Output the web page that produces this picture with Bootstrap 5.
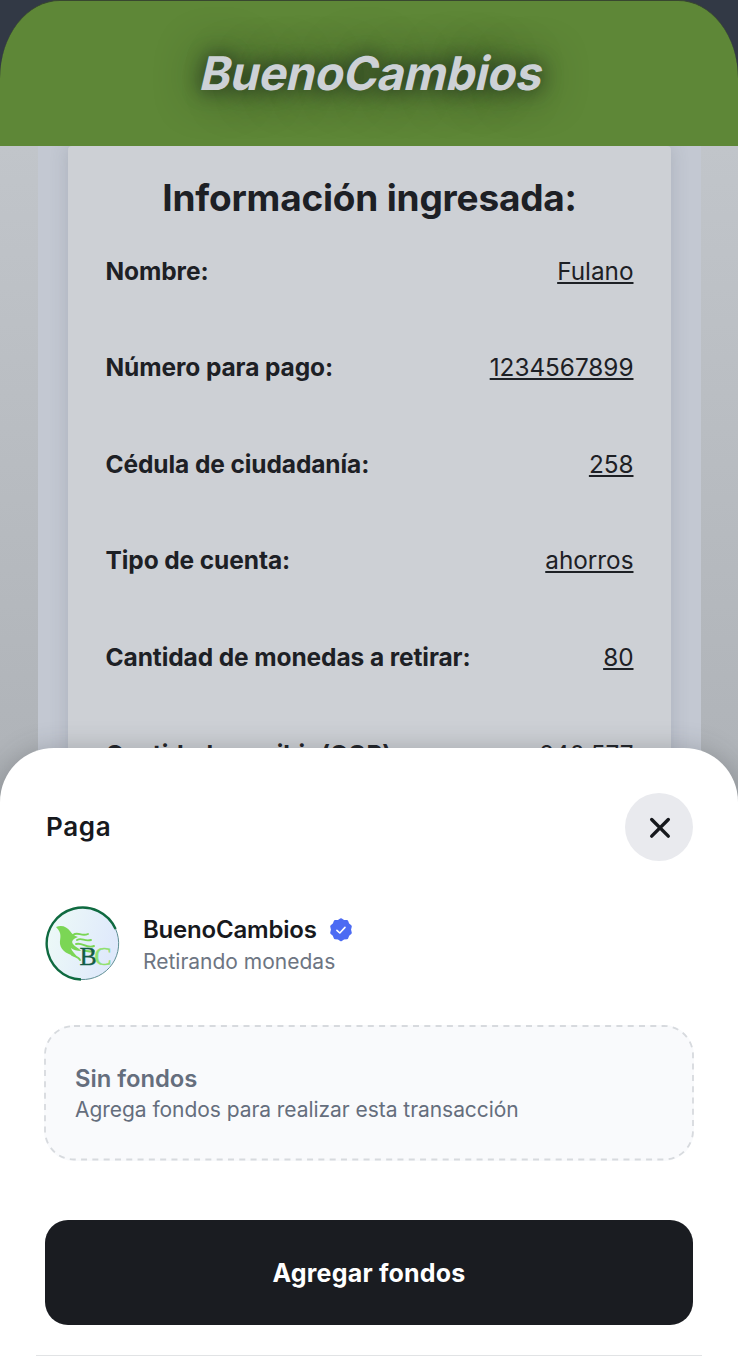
<!DOCTYPE html>
<html lang="es">
<head>
<meta charset="utf-8">
<meta name="viewport" content="width=device-width, initial-scale=1">
<title>BuenoCambios</title>
<link href="https://cdn.jsdelivr.net/npm/bootstrap@5.3.0/dist/css/bootstrap.min.css" rel="stylesheet">
<style>
  body { font-family: Inter, "Liberation Sans", sans-serif; color: #1d2025; background: #fff; min-height: 1361px; overflow: hidden; }
  .app-top { background: #323945; height: 146px; }
  .brand-bar { background: #5e8737; border-top: 1px solid #38472f; border-radius: 60px 60px 0 0 / 78px 78px 0 0; }
  .brand-name { font-size: 46.5px; font-weight: 700; line-height: 56px; letter-spacing: -.3px; color: #cdd1d6; transform: skewX(-13deg); text-shadow: 0 0 18px rgba(20,28,25,.75), 0 0 44px rgba(20,28,25,.85); margin: 0 0 2px 7px; }
  .page-area { height: 656px; padding: 0 37px 0 38px; background: linear-gradient(#c1c5ca, #b0b4b9 600px, #a5a9ad); }
  .panel-wrap { background: #c3c8d2; padding: 0 30px; }
  .info-panel { background: #cdd0d5; padding: 0 37.5px; box-shadow: 0 0 18px rgba(80,90,105,.22); border-radius: 4px 4px 0 0; }
  .info-title { height: 76.4px; padding-top: 29px; font-size: 37px; line-height: 46px; font-weight: 700; letter-spacing: -.2px; margin: 0; }
  .info-row { height: 96.6px; font-size: 24.5px; line-height: 30px; }
  .info-row dt { font-weight: 650; letter-spacing: -.1px; }
  .info-row dd { margin: 0; font-size: 24.3px; font-weight: 400; text-decoration: underline; text-decoration-thickness: 2px; text-underline-offset: 2px; }
  .sheet { margin-top: -54px; height: 613px; padding: 45px 45px 0; border-radius: 54px 54px 0 0; box-shadow: 0 0 26px rgba(60,64,70,.28); z-index: 2; }
  .sheet-title { font-size: 26px; line-height: 32px; font-weight: 600; letter-spacing: .7px; padding-left: 1px; color: #17191d; }
  .close-round { width: 68px; height: 68px; background: #e9eaee; border: 0; }
  .merchant { margin-top: 45px; height: 76px; gap: 22px; }
  .merchant-name { font-size: 24px; line-height: 32px; font-weight: 600; letter-spacing: -.2px; color: #17191d; }
  .merchant-sub { font-size: 21px; line-height: 32px; color: #6d7582; }
  .merchant-info { padding-top: 3px; }
  .funds-box { margin: 43px -1px 0; height: 136px; border-radius: 30px; background: #f9fafc; color: #656e7d; padding: 37.5px 31px 0; }
  .funds-box > svg { inset: 0; }
  .funds-title { font-size: 23.8px; line-height: 32px; font-weight: 600; }
  .funds-text { font-size: 21px; line-height: 30px; letter-spacing: -.05px; }
  .add-funds { margin-top: 59px; height: 105px; border-radius: 23px; background: #1a1c21; color: #fff; font-size: 25px; font-weight: 650; letter-spacing: .2px; padding-top: 8px; }
  .add-funds:hover { background: #1a1c21; color: #fff; }
  .foot-line { height: 1px; background: #e1e3e5; margin: 30px -9px 0; }
</style>
</head>
<body>
<header class="app-top">
  <div class="brand-bar h-100 d-flex align-items-center justify-content-center">
    <h1 class="brand-name">BuenoCambios</h1>
  </div>
</header>
<main>
  <section class="page-area overflow-hidden">
    <div class="panel-wrap h-100">
      <div class="info-panel h-100">
        <h2 class="info-title text-center text-nowrap">Información ingresada:</h2>
        <dl class="m-0">
          <div class="info-row d-flex justify-content-between align-items-center"><dt>Nombre:</dt><dd>Fulano</dd></div>
          <div class="info-row d-flex justify-content-between align-items-center"><dt>Número para pago:</dt><dd>1234567899</dd></div>
          <div class="info-row d-flex justify-content-between align-items-center"><dt>Cédula de ciudadanía:</dt><dd>258</dd></div>
          <div class="info-row d-flex justify-content-between align-items-center"><dt>Tipo de cuenta:</dt><dd>ahorros</dd></div>
          <div class="info-row d-flex justify-content-between align-items-center"><dt>Cantidad de monedas a retirar:</dt><dd>80</dd></div>
          <div class="info-row d-flex justify-content-between align-items-center"><dt>Cantidad a recibir (COP):</dt><dd>240.577</dd></div>
        </dl>
      </div>
    </div>
  </section>
  <section class="sheet bg-white position-relative">
    <div class="d-flex justify-content-between align-items-center">
      <div class="sheet-title">Paga</div>
      <button class="close-round rounded-circle p-0 d-flex align-items-center justify-content-center" aria-label="Cerrar">
        <svg width="24" height="24" viewBox="0 0 24 24" fill="none" stroke="#17191d" stroke-width="3.4" stroke-linecap="round"><path d="M4.700 4.500 21.300 21.100M21.300 4.500 4.700 21.100"/></svg>
      </button>
    </div>
    <div class="merchant d-flex align-items-center">
      <svg width="76" height="76" viewBox="0 0 76 76" aria-hidden="true">
        <defs><linearGradient id="disc" x1="0" y1="0" x2="1" y2=".3"><stop offset="0" stop-color="#eefbf7"/><stop offset="1" stop-color="#dfe9fb"/></linearGradient></defs>
        <circle cx="37.500" cy="37.500" r="36" fill="url(#disc)"/>
        <path d="M70.600 23A36 36 0 1 0 36 73.500" fill="none" stroke="#0f6a40" stroke-width="2.400"/>
        <path d="M36 73.500A36 36 0 0 0 70.600 23" fill="none" stroke="#5d8d94" stroke-width="1"/>
        <g fill="#7bd655">
          <path d="M11 21C17 18.500 22 21 25 25C27 28 29 30 33 31C28 33 26 35 28 38C30 41 34 42 36 45C32 45 28 44 26 42C27 46 31 48 32 51C24 49 16 45 15 38C14.500 32 18 28 11 21Z"/>
        </g>
        <g fill="none" stroke="#7bd655" stroke-width="1.900" stroke-linecap="round">
          <path d="M28 29C33 25 36 31 43 28M32 34C37 31 39 36 46 34M31 38C38 36 41 43 49 40M39 45C43 44 45 47 49 45M27 49C31 51 34 51 35 54"/>
        </g>
        <text x="34.500" y="58.500" font-family="Liberation Serif, serif" font-size="26" fill="#145c45" stroke="#145c45" stroke-width=".4">B<tspan dx="-2.500" fill="#8fe06d" stroke="#8fe06d">C</tspan></text>
      </svg>
      <div class="merchant-info">
        <div class="d-flex align-items-center gap-2">
          <span class="merchant-name">BuenoCambios</span>
          <svg class="ms-1" width="24" height="24" viewBox="0 0 24 24" aria-label="Verificado">
            <path fill="#4c6bf3" stroke="#4c6bf3" stroke-width="3" stroke-linejoin="round" d="M12 1.800 14.600 3.500 17.800 3.600 18.900 6.500 21.300 8.500 20.500 11.700 21.300 14.900 18.900 16.900 17.800 19.800 14.600 20 12 21.700 9.400 20 6.200 19.800 5.100 16.900 2.700 14.900 3.500 11.700 2.700 8.500 5.100 6.500 6.200 3.600 9.400 3.500Z"/>
            <path d="M7.900 12.300 10.800 15 16 9.400" fill="none" stroke="#fff" stroke-width="1.600" stroke-linecap="round" stroke-linejoin="round"/>
          </svg>
        </div>
        <div class="merchant-sub">Retirando monedas</div>
      </div>
    </div>
    <div class="funds-box position-relative">
      <svg class="position-absolute w-100 h-100" aria-hidden="true"><rect x="1" y="1" width="648" height="133.500" rx="29" fill="none" stroke="#d7dade" stroke-width="1.800" stroke-dasharray="6 5.300"/></svg>
      <div class="funds-title">Sin fondos</div>
      <div class="funds-text">Agrega fondos para realizar esta transacción</div>
    </div>
    <button class="btn add-funds w-100 border-0">Agregar fondos</button>
    <div class="foot-line"></div>
  </section>
</main>
<script src="https://cdn.jsdelivr.net/npm/bootstrap@5.3.0/dist/js/bootstrap.bundle.min.js"></script>
</body>
</html>
